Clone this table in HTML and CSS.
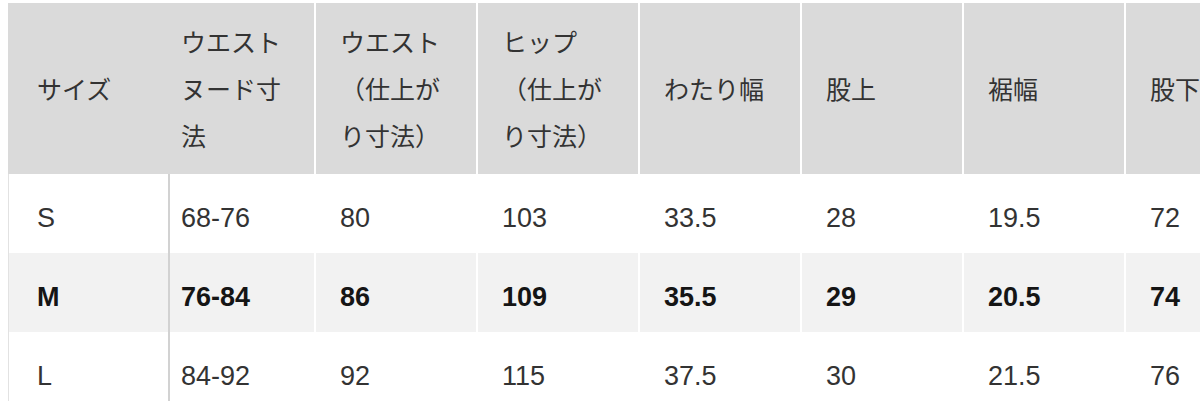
FILE: index.html
```html
<!DOCTYPE html>
<html lang="ja">
<head>
<meta charset="utf-8">
<title>サイズ表</title>
<link rel="stylesheet" href="styles.css">
</head>
<body>
<div class="table-wrap">
  <table class="size-table">
    <thead>
      <tr>
        <th class="col-size">サイズ</th>
        <th class="col-nude">ウエストヌード寸法</th>
        <th class="col-std">ウエスト（仕上がり寸法）</th>
        <th class="col-std">ヒップ（仕上がり寸法）</th>
        <th class="col-std">わたり幅</th>
        <th class="col-std">股上</th>
        <th class="col-std">裾幅</th>
        <th class="col-std">股下</th>
      </tr>
    </thead>
    <tbody>
      <tr>
        <td class="col-size">S</td>
        <td class="col-nude">68-76</td>
        <td>80</td>
        <td>103</td>
        <td>33.5</td>
        <td>28</td>
        <td>19.5</td>
        <td>72</td>
      </tr>
      <tr class="row-highlight">
        <td class="col-size">M</td>
        <td class="col-nude">76-84</td>
        <td>86</td>
        <td>109</td>
        <td>35.5</td>
        <td>29</td>
        <td>20.5</td>
        <td>74</td>
      </tr>
      <tr>
        <td class="col-size">L</td>
        <td class="col-nude">84-92</td>
        <td>92</td>
        <td>115</td>
        <td>37.5</td>
        <td>30</td>
        <td>21.5</td>
        <td>76</td>
      </tr>
    </tbody>
  </table>
</div>
</body>
</html>
```

FILE: styles.css
```css
html, body {
  margin: 0;
  padding: 0;
  background: #ffffff;
  overflow: hidden;
}

body {
  font-family: "Liberation Sans", "Noto Sans CJK JP", sans-serif;
  color: #333333;
}

.table-wrap {
  padding: 3px 0 0 8px;
  width: 1192px;
  overflow: hidden;
}

.size-table {
  border-collapse: separate;
  border-spacing: 0;
  table-layout: fixed;
  width: 1280px;
}

.size-table th,
.size-table td {
  box-sizing: border-box;
  text-align: left;
  vertical-align: middle;
  border-right: 2px solid #ffffff;
  padding-left: 24px;
  padding-right: 34px;
  width: 162px;
}

.size-table thead th {
  background: #dadada;
  font-family: "Noto Sans CJK JP", sans-serif;
  font-size: 25px;
  font-weight: 400;
  line-height: 47px;
  color: #333333;
  padding-top: 15px;
  padding-bottom: 15px;
  height: 171px;
}

.size-table tbody td {
  font-size: 27px;
  line-height: 31px;
  padding-top: 29px;
  padding-bottom: 19px;
  height: 79px;
  color: #333333;
}

.size-table .col-size {
  width: 162px;
  padding-left: 28px;
  border-left: 1px solid #dadada;
}

.size-table thead .col-size {
  border-right-color: #dadada;
}

.size-table tbody .col-size {
  border-left: 1px solid #e2e2e2;
  border-right: 2px solid #d2d2d2;
}

.size-table .col-nude {
  width: 146px;
  padding-left: 11px;
  padding-right: 30px;
}

.size-table .row-highlight td {
  background: #f2f2f2;
  font-weight: 700;
  color: #151515;
}
```
